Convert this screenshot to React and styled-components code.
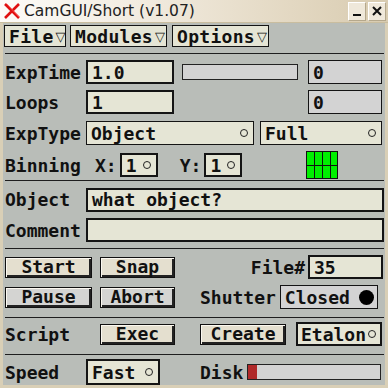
import styled, { createGlobalStyle } from "styled-components";

const GlobalStyle = createGlobalStyle`
  html, body {
    margin: 0;
    padding: 0;
    background: #d9cfb6;
  }
`;

const Window = styled.div`
  width: 388px;
  height: 388px;
  box-sizing: border-box;
  background: #d9cfb6;
  display: flex;
  flex-direction: column;
  overflow: hidden;
  font-family: "DejaVu Sans Mono", "Liberation Mono", monospace;
  color: #111;
`;

const TitleBar = styled.div`
  height: 22px;
  flex: none;
  display: flex;
  align-items: center;
  padding: 0 2px 0 3px;
  background: linear-gradient(to right, #fdfbf8 0%, #f2ece1 35%, #e3d8c2 75%, #d8cbb0 100%);
  border-bottom: 1px solid #c9bd9f;
`;

const TitleText = styled.span`
  font-family: "DejaVu Sans", "Verdana", sans-serif;
  font-size: 15.5px;
  color: #222;
  margin-left: 3px;
  flex: 1;
`;

const TitleButton = styled.div`
  width: 18px;
  height: 19px;
  box-sizing: border-box;
  margin-left: 2px;
  display: flex;
  align-items: center;
  justify-content: center;
  background: #efe8da;
  border: 1px solid #fff;
  border-right-color: #b5a88c;
  border-bottom-color: #b5a88c;
`;

const Body = styled.div`
  flex: 1;
  margin: 0 3px 4px 3px;
  padding: 2px 1px 0 2px;
  background: #b9bdb8;
  display: flex;
  flex-direction: column;
`;

const Row = styled.div`
  display: flex;
  align-items: center;
  height: ${(p) => p.h || 24}px;
  margin-top: ${(p) => p.mt || 0}px;
  margin-left: ${(p) => p.ml || 0}px;
  flex: none;
`;

const Separator = styled.div`
  height: 1px;
  background: #1e1e1e;
  margin-top: ${(p) => p.mt || 0}px;
  flex: none;
`;

const Label = styled.span`
  font-weight: bold;
  font-size: 18px;
  width: ${(p) => (p.w ? `${p.w}px` : "auto")};
  margin-left: ${(p) => p.ml || 0}px;
  text-align: ${(p) => p.align || "left"};
  flex: none;
  white-space: nowrap;
`;

const Field = styled.div`
  box-sizing: border-box;
  width: ${(p) => p.w}px;
  height: ${(p) => p.h || 24}px;
  margin-left: ${(p) => p.ml || 0}px;
  border: ${(p) => p.b || 2}px solid #141414;
  background: ${(p) => (p.grey ? "#d3d3d3" : "#e5e5d5")};
  display: flex;
  align-items: center;
  justify-content: space-between;
  padding: 0 ${(p) => p.pr || 5}px 0 ${(p) => p.pl || 4}px;
  font-weight: bold;
  font-size: 18px;
  flex: none;
  white-space: nowrap;
`;

const Circle = styled.span`
  width: 6px;
  height: 6px;
  border: 1px solid #222;
  border-radius: 50%;
  flex: none;
`;

const Dot = styled.span`
  width: 15px;
  height: 15px;
  background: #000;
  border-radius: 50%;
  flex: none;
  margin-right: -2px;
`;

const MenuButton = styled.div`
  box-sizing: border-box;
  width: ${(p) => p.w}px;
  height: 22px;
  margin-right: ${(p) => p.mr || 4}px;
  padding-left: 4px;
  border: 1px solid #141414;
  background: #e5e5d5;
  display: flex;
  align-items: center;
  font-weight: bold;
  font-size: 18px;
  letter-spacing: 0.3px;
`;

const Tri = styled.span`
  font-family: "DejaVu Sans", sans-serif;
  font-weight: normal;
  font-size: 13px;
  margin-left: 2px;
`;

const Button = styled.div`
  box-sizing: border-box;
  width: ${(p) => p.w}px;
  height: ${(p) => p.h || 21}px;
  margin-left: ${(p) => p.ml || 0}px;
  background: ${(p) => (p.grey ? "#d4d4d2" : "#e4dfcf")};
  border: 1px solid #111;
  box-shadow: inset 1px 1px 0 #fbf8f0, inset -2px -2px 0 #222;
  display: flex;
  align-items: center;
  justify-content: center;
  padding-bottom: 1px;
  font-weight: bold;
  font-size: 18px;
  flex: none;
`;

const Bar = styled.div`
  box-sizing: border-box;
  width: ${(p) => p.w}px;
  height: ${(p) => p.h}px;
  margin-left: ${(p) => p.ml || 0}px;
  border: 1px solid #222;
  background: #d3d3d3;
  display: flex;
  flex: none;
`;

const Fill = styled.div`
  background: #b02a2a;
  height: 100%;
`;

const Grid = styled.div`
  box-sizing: border-box;
  width: 32px;
  height: 28px;
  margin-left: ${(p) => p.ml || 0}px;
  align-self: flex-start;
  display: grid;
  grid-template-columns: repeat(4, 1fr);
  grid-template-rows: repeat(2, 1fr);
  gap: 1px;
  background: #111;
  border: 1px solid #111;
  flex: none;
`;

const Cell = styled.div`
  background: #00f000;
`;

const Spacer = styled.div`
  flex: 1;
`;

function XIcon() {
  return (
    <svg width="18" height="16" viewBox="0 0 18 16">
      <path d="M2 1 L16 15 M16 1 L2 15" stroke="#e01010" strokeWidth="2.6" />
      <path d="M4 1 L16 14" stroke="#ff5a5a" strokeWidth="0.8" />
    </svg>
  );
}

export default function App() {
  return (
    <Window>
      <GlobalStyle />
      <TitleBar>
        <XIcon />
        <TitleText>CamGUI/Short (v1.07)</TitleText>
        <TitleButton>
          <svg width="12" height="12" viewBox="0 0 12 12">
            <rect x="2" y="9" width="8" height="2" fill="#111" />
          </svg>
        </TitleButton>
        <TitleButton>
          <svg width="12" height="12" viewBox="0 0 12 12">
            <path d="M2 2 L10 10 M10 2 L2 10" stroke="#111" strokeWidth="2" />
          </svg>
        </TitleButton>
      </TitleBar>

      <Body>
        <Row h={22} ml={-1}>
          <MenuButton w={62}>File<Tri>▽</Tri></MenuButton>
          <MenuButton w={97} mr={5}>Modules<Tri>▽</Tri></MenuButton>
          <MenuButton w={97}>Options<Tri>▽</Tri></MenuButton>
        </Row>

        <Separator mt={6} />

        <Row mt={6}>
          <Label w={81}>ExpTime</Label>
          <Field w={88}>1.0</Field>
          <Bar w={116} h={16} ml={8} />
          <Field w={74} b={1} grey ml={10}>0</Field>
        </Row>

        <Row mt={6}>
          <Label w={81}>Loops</Label>
          <Field w={88}>1</Field>
          <Spacer />
          <Field w={74} b={1} grey>0</Field>
          <div style={{ width: 2 }} />
        </Row>

        <Row mt={7}>
          <Label w={81}>ExpType</Label>
          <Field w={168} b={1}>Object<Circle /></Field>
          <Field w={122} b={1} ml={6}>Full<Circle /></Field>
        </Row>

        <Row mt={6} h={28}>
          <Label w={90}>Binning</Label>
          <Label>X:</Label>
          <Field w={38} ml={3}>1<Circle /></Field>
          <Label ml={22}>Y:</Label>
          <Field w={38} ml={3}>1<Circle /></Field>
          <Grid ml={64}>
            {Array.from({ length: 8 }).map((_, i) => (
              <Cell key={i} />
            ))}
          </Grid>
        </Row>

        <Separator mt={1} />

        <Row mt={5} h={27}>
          <Label w={81}>Object</Label>
          <Field w={298}>what object?</Field>
        </Row>

        <Row mt={4} h={26}>
          <Label w={81}>Comment</Label>
          <Field w={298} />
        </Row>

        <Separator mt={5} />

        <Row mt={6}>
          <Button w={87}>Start</Button>
          <Button w={75} ml={8}>Snap</Button>
          <Spacer />
          <Label>File#</Label>
          <Field w={75} ml={3}>35</Field>
          <div style={{ width: 1 }} />
        </Row>

        <Row mt={6}>
          <Button w={87} grey>Pause</Button>
          <Button w={75} ml={8} grey>Abort</Button>
          <Label ml={25}>Shutter</Label>
          <Field w={98} b={1} grey ml={4}>Closed<Dot /></Field>
        </Row>

        <Separator mt={8} />

        <Row mt={5} h={22}>
          <Label w={95}>Script</Label>
          <Button w={75}>Exec</Button>
          <Button w={86} ml={25}>Create</Button>
          <Field w={86} b={2} ml={10} h={24} pl={3} pr={4}>Etalon<Circle /></Field>
        </Row>

        <Separator mt={9} />

        <Row mt={4} h={26}>
          <Label w={81}>Speed</Label>
          <Field w={74} h={26}>Fast<Circle /></Field>
          <Label ml={40}>Disk</Label>
          <Bar w={134} h={16} ml={4}>
            <Fill style={{ width: 9 }} />
          </Bar>
        </Row>
      </Body>
    </Window>
  );
}
